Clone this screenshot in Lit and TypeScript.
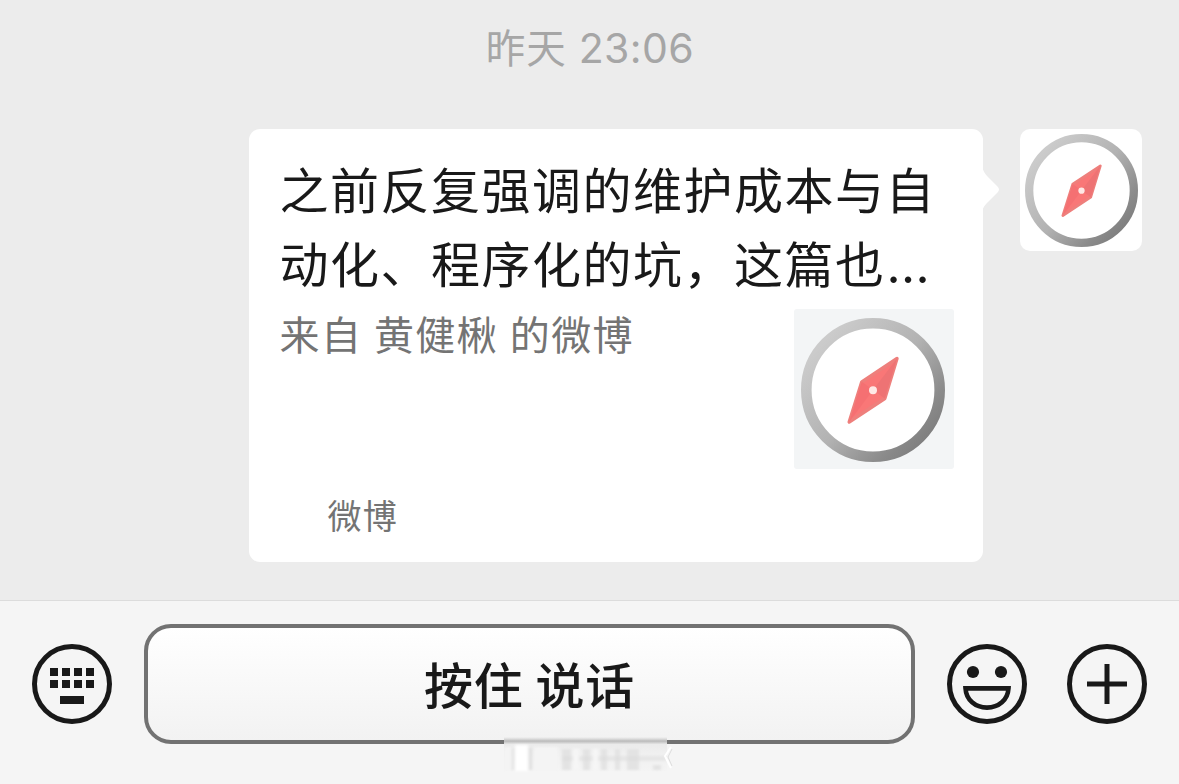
import { css, html, LitElement } from 'lit';
import { customElement, property } from 'lit/decorators.js';

@customElement('compass-icon')
export class CompassIcon extends LitElement {
  static override styles = css`
    :host {
      display: block;
    }

    .compass {
      display: block;
      width: 100%;
      height: 100%;
    }
  `;

  override render() {
    return html`<svg class="compass" viewBox="0 0 144 144">
      <defs>
        <linearGradient id="ring" x1="0.12" y1="0.15" x2="0.9" y2="0.85">
          <stop offset="0" stop-color="#cbcbcb" />
          <stop offset="0.5" stop-color="#b2b2b2" />
          <stop offset="0.85" stop-color="#8c8c8c" />
          <stop offset="1" stop-color="#808080" />
        </linearGradient>
      </defs>
      <circle
        cx="72"
        cy="72"
        r="66.7"
        fill="#fff"
        stroke="url(#ring)"
        stroke-width="10.6"
      />
      <path
        d="M96 40.5 L83.8 80.5 L48.2 104 L60.8 63.8 Z"
        fill="#f97777"
        stroke="#ee7f7c"
        stroke-width="3.4"
        stroke-linejoin="round"
      />
      <path d="M96 40.5 L83.8 80.5 L72 72 Z" fill="#ee7374" />
      <path d="M48.2 104 L60.8 63.8 L72 72 Z" fill="#f57072" />
      <circle cx="72" cy="72.3" r="4" fill="#ffe9e6" />
    </svg>`;
  }
}

@customElement('round-icon')
export class RoundIcon extends LitElement {
  static override styles = css`
    :host {
      display: block;
      flex: none;
      width: 80px;
      height: 80px;
    }

    .icon {
      display: block;
      fill: none;
      stroke: #191919;
      stroke-width: 5;
    }

    .solid {
      fill: #191919;
      stroke: none;
    }
  `;

  @property({ type: String })
  type: 'keyboard' | 'smile' | 'plus' = 'plus';

  private shape() {
    switch (this.type) {
      case 'keyboard':
        return html`<svg class="icon" width="80" height="80">
          <circle cx="40" cy="40" r="37.5" />
          <path
            class="solid"
            d="M18 24h8v8h-8z M30 24h8v8h-8z M42 24h8v8h-8z M54 24h8v8h-8z
               M18 36h8v8h-8z M30 36h8v8h-8z M42 36h8v8h-8z M54 36h8v8h-8z
               M28 52h24v8h-24z"
          />
        </svg>`;
      case 'smile':
        return html`<svg class="icon" width="80" height="80">
          <circle cx="40" cy="40" r="37.5" />
          <circle class="solid" cx="26" cy="28" r="6.1" />
          <circle class="solid" cx="54" cy="28" r="6.1" />
          <path
            stroke-width="4.6"
            d="M18.5 44.4 H61.5 C60.8 56 51.8 63.6 40 63.6 S19.2 56 18.5 44.4 Z"
          />
        </svg>`;
      default:
        return html`<svg class="icon" width="80" height="80">
          <circle cx="40" cy="40" r="37.5" />
          <path d="M40 20 V60 M20 40 H60" />
        </svg>`;
    }
  }

  override render() {
    return this.shape();
  }
}

@customElement('link-card')
export class LinkCard extends LitElement {
  static override styles = css`
    :host {
      display: block;
      position: relative;
      box-sizing: border-box;
      width: 734px;
      height: 433px;
      padding: 22px 29px 0 30.5px;
      border-radius: 11px;
      background: #fff;
    }

    .tail {
      position: absolute;
      left: 733px;
      top: 37px;
    }

    .title {
      font-size: 49px;
      line-height: 74px;
      letter-spacing: 1.5px;
      color: #191919;
      white-space: nowrap;
    }

    .dots {
      margin-left: 1px;
      letter-spacing: 0.4px;
      font-family: Inter, sans-serif;
    }

    .body {
      display: flex;
      justify-content: space-between;
      height: 160px;
      margin-top: 10px;
    }

    .desc {
      margin-top: -6px;
      font-size: 40px;
      line-height: 52px;
      letter-spacing: 1.4px;
      word-spacing: 1.3px;
      color: #747474;
      white-space: nowrap;
    }

    .thumb {
      box-sizing: border-box;
      width: 160px;
      height: 160px;
      margin-top: -4px;
      padding: 9px 9px 7px 7px;
      border-radius: 3px;
      background: #f3f5f6;
    }

    .dial {
      width: 144px;
      height: 144px;
    }

    .source {
      margin: 17px 0 0 48px;
      font-size: 34px;
      line-height: 50px;
      letter-spacing: 1.2px;
      color: #747474;
    }
  `;

  override render() {
    return html`
      <svg class="tail" width="20" height="48" viewBox="0 0 20 48">
        <path
          d="M0 0 C1 5 3 8 6 11 L15.5 20.5 Q18.5 23.5 15.5 26.5 L6 36 C3 39 1 41 0 46 Z"
          fill="#fff"
        />
      </svg>
      <div class="title">之前反复强调的维护成本与自</div>
      <div class="title">
        动化、程序化的坑，这篇也<span class="dots">...</span>
      </div>
      <div class="body">
        <div class="desc">来自 黄健楸 的微博</div>
        <div class="thumb"><compass-icon class="dial"></compass-icon></div>
      </div>
      <div class="source">微博</div>
    `;
  }
}

@customElement('app-root')
export class AppRoot extends LitElement {
  static override styles = css`
    :host {
      display: flex;
      flex-direction: column;
      height: 784px;
      overflow: hidden;
      background: #ececec;
      font-family: 'Noto Sans CJK SC', sans-serif;
    }

    .chat {
      flex: 1;
    }

    .time {
      height: 129px;
      box-sizing: border-box;
      padding: 16px 0 0 1px;
      text-align: center;
      font-size: 39.5px;
      line-height: 60px;
      letter-spacing: 1px;
      color: #a6a6a6;
    }

    .clock {
      margin-left: 2px;
      font-family: Inter, sans-serif;
      font-size: 41px;
      letter-spacing: 0.4px;
    }

    .message {
      display: flex;
      justify-content: flex-end;
      gap: 37px;
      padding-right: 37px;
    }

    .avatar {
      box-sizing: border-box;
      width: 122px;
      height: 122px;
      padding: 5px 4px 4px 5px;
      border-radius: 10px;
      background: #fff;
    }

    .dial {
      width: 113px;
      height: 113px;
    }

    .bar {
      display: flex;
      align-items: flex-start;
      box-sizing: border-box;
      height: 184px;
      padding: 23px 32px 0;
      border-top: 1px solid #dcdcdc;
      background: #f5f5f5;
    }

    .bar-icon {
      margin-top: 20px;
    }

    .talk {
      position: relative;
      box-sizing: border-box;
      flex: 1;
      height: 120px;
      margin: 0 32px;
      border: 4px solid #727272;
      border-radius: 27px;
      background: linear-gradient(#fff, #f2f2f2);
      text-align: center;
      font-size: 49px;
      font-weight: 500;
      line-height: 110px;
      letter-spacing: 0.8px;
      color: #191919;
    }

    .smudge {
      position: absolute;
      left: 356px;
      top: 109px;
    }

    .plus {
      margin-left: 40px;
    }
  `;

  override render() {
    return html`
      <div class="chat">
        <div class="time">昨天 <span class="clock">23:06</span></div>
        <div class="message">
          <link-card></link-card>
          <div class="avatar"><compass-icon class="dial"></compass-icon></div>
        </div>
      </div>
      <div class="bar">
        <round-icon class="bar-icon" type="keyboard"></round-icon>
        <div class="talk">
          按住 说话
          <svg class="smudge" width="172" height="38" viewBox="0 0 172 38">
            <defs>
              <linearGradient id="cover" x1="0" y1="0" x2="0" y2="1">
                <stop offset="0" stop-color="#f2f2f2" />
                <stop offset="0.06" stop-color="#dcdcdc" />
                <stop offset="0.12" stop-color="#bababa" />
                <stop offset="0.22" stop-color="#ebebeb" />
                <stop offset="0.5" stop-color="#f0f0f0" />
                <stop offset="1" stop-color="#f4f4f4" />
              </linearGradient>
              <filter id="soft" x="-20%" y="-20%" width="140%" height="140%">
                <feGaussianBlur stdDeviation="1.8 1.2" />
              </filter>
            </defs>
            <rect width="163" height="34" fill="url(#cover)" />
            <g filter="url(#soft)">
              <path d="M0 10h8v24h-8z M30 10h24v24h-24z" fill="#f4f4f4" />
              <path d="M11 8h13v26h-13z" fill="#fff" />
              <path d="M25 11h3v22h-3z M8 11h2v22h-2z" fill="#dedede" />
              <path
                d="M58 12h9v21h-9z M79 12h7v21h-7z M97 12h6v21h-6z M111 12h5v21h-5z M123 12h12v21h-12z M149 28h8v5h-8z"
                fill="#e3e3e3"
              />
              <path d="M58 19h104v5h-104z" fill="#dcdcdc" opacity="0.5" />
              <path d="M69 12h6v21h-6z M89 12h5v21h-5z" fill="#f6f6f6" />
            </g>
            <path
              d="M167 10 L161 19 L167 31"
              fill="none"
              stroke="#fff"
              stroke-width="2"
            />
            <path d="M168 12 L164 20 L168 29" fill="none" stroke="#ddd" />
          </svg>
        </div>
        <round-icon class="bar-icon" type="smile"></round-icon>
        <round-icon class="bar-icon plus" type="plus"></round-icon>
      </div>
    `;
  }
}
